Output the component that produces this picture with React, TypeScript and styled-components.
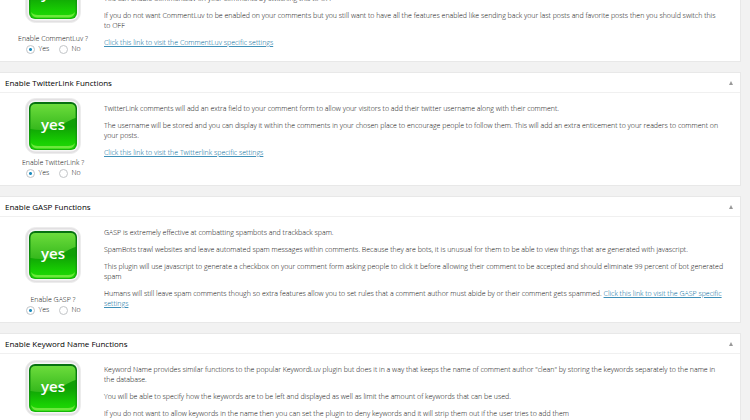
import React, { useId, useState } from "react";
import styled, { createGlobalStyle } from "styled-components";

const GlobalStyle = createGlobalStyle`
  * { box-sizing: border-box; }
  html, body { height: 100%; }
  body {
    margin: 0;
    overflow: hidden;
    background: #f2f2f2;
    color: #0c0c0c;
    font-family: "Open Sans", "Noto Sans", sans-serif;
    font-size: 7px;
    font-weight: 300;
    line-height: 10px;
  }
`;

const Page = styled.main`
  display: flex;
  flex-direction: column;
  gap: 10px;
  margin-top: -40px;
  padding-right: 9px;
`;

const Card = styled.section`
  background: #fff;
  border: 1px solid #e8e8e8;
  border-left: 0;
`;

const CardHeader = styled.header`
  display: flex;
  align-items: center;
  justify-content: space-between;
  height: 20px;
  padding: 0 5px;
  border-bottom: 1px solid #f0f0f0;
`;

const Title = styled.h3`
  margin: 0;
  color: #000;
  font-size: 8px;
  font-weight: 500;
  line-height: 12px;
`;

const Toggle = styled.button`
  display: flex;
  align-items: center;
  justify-content: center;
  width: 8px;
  height: 8px;
  padding: 0;
  border: 0;
  background: none;
  color: #999;
`;

const CardBody = styled.div`
  display: grid;
  grid-template-columns: 98px 1fr;
  column-gap: 2px;
  padding: 0 14px 7px 4px;
`;

const Control = styled.div<{ $top: number; $gap: number }>`
  display: flex;
  flex-direction: column;
  align-items: center;
  gap: ${(p) => p.$gap}px;
  padding-top: ${(p) => p.$top}px;
`;

const Choice = styled.fieldset`
  display: flex;
  flex-direction: column;
  align-items: center;
  margin: 0;
  padding: 0;
  border: 0;
`;

const Legend = styled.legend`
  padding: 0;
  text-align: center;
`;

const Options = styled.div`
  display: grid;
  grid-template-columns: 33px 22px;
`;

const Option = styled.label`
  display: flex;
  align-items: center;
  gap: 4px;
`;

const Radio = styled.input`
  appearance: none;
  flex: none;
  width: 9px;
  height: 9px;
  margin: 0;
  border: 1px solid #c2c5c8;
  border-radius: 50%;
  background: #fff;
  &:checked {
    background: radial-gradient(circle, #1e8cbe 0 1px, #fff 2px);
  }
`;

const Copy = styled.div<{ $top: number }>`
  display: flex;
  flex-direction: column;
  gap: 7px;
  padding-top: ${(p) => p.$top}px;
`;

const Paragraph = styled.p`
  margin: 0;
`;

const Link = styled.a`
  color: #006799;
  text-decoration: underline;
  text-decoration-color: #3f90b8;
`;

const Badge = styled.svg`
  display: block;
  width: 56px;
  height: 56px;
`;

function YesBadge() {
  const id = useId();
  const ref = (name: string) => `url(#${id}${name})`;
  return (
    <Badge viewBox="0 0 56 56" role="img" aria-label="yes">
      <defs>
        <linearGradient id={`${id}base`} x1="0" y1="0" x2="0" y2="1">
          <stop offset="0" stopColor="#189a0c" />
          <stop offset="0.5" stopColor="#0fa005" />
          <stop offset="0.85" stopColor="#18cf02" />
          <stop offset="1" stopColor="#22d808" />
        </linearGradient>
        <linearGradient id={`${id}gloss`} x1="0" y1="0" x2="0" y2="1">
          <stop offset="0" stopColor="#6cdc3c" />
          <stop offset="1" stopColor="#35b81c" />
        </linearGradient>
        <linearGradient id={`${id}rim`} x1="0" y1="0" x2="0" y2="1">
          <stop offset="0" stopColor="#067010" />
          <stop offset="0.45" stopColor="#0d8a0c" />
          <stop offset="1" stopColor="#16b808" />
        </linearGradient>
      </defs>
      <rect x="0.5" y="0.5" width="55" height="55" rx="10" fill="#e2e0e2" stroke="#ececec" />
      <rect x="2.5" y="2.5" width="51" height="51" rx="8" fill="#f6f6f6" />
      <rect x="4" y="4" width="48" height="48" rx="6" fill={ref("rim")} />
      <rect x="5.5" y="6" width="45" height="45" rx="5" fill={ref("base")} />
      <path
        d="M5.5 11Q5.5 6 10.5 6H45.5Q50.5 6 50.5 11V20C43 22 38 28 27 30.500C19 32.500 12 32 5.500 31Z"
        fill={ref("gloss")}
      />
      <path d="M6 45Q7 50 12 50.500H44Q49 50 50 45Q48 48 43 48H13Q8 48 6 45Z" fill="#6ce83c" />
      <text
        x="28"
        y="32"
        textAnchor="middle"
        fill="#fff"
        fontFamily="Open Sans, sans-serif"
        fontSize="15"
        fontWeight="600"
      >
        yes
      </text>
    </Badge>
  );
}

type FeatureProps = {
  name: string;
  title?: string;
  badgeTop: number;
  badgeGap: number;
  copyTop?: number;
  children: React.ReactNode;
};

function Feature({ name, title, badgeTop, badgeGap, copyTop = 11, children }: FeatureProps) {
  const [enabled, setEnabled] = useState(true);
  return (
    <Card>
      {title && (
        <CardHeader>
          <Title>{title}</Title>
          <Toggle type="button" aria-label="Collapse">
            <svg width="4" height="4" viewBox="0 0 4 4">
              <path d="M2 0L4 4H0Z" fill="currentColor" />
            </svg>
          </Toggle>
        </CardHeader>
      )}
      <CardBody>
        <Control $top={badgeTop} $gap={badgeGap}>
          <YesBadge />
          <Choice>
            <Legend>Enable {name} ?</Legend>
            <Options>
              <Option>
                <Radio type="radio" name={name} checked={enabled} onChange={() => setEnabled(true)} />
                Yes
              </Option>
              <Option>
                <Radio type="radio" name={name} checked={!enabled} onChange={() => setEnabled(false)} />
                No
              </Option>
            </Options>
          </Choice>
        </Control>
        <Copy $top={copyTop}>{children}</Copy>
      </CardBody>
    </Card>
  );
}

export default function App() {
  return (
    <>
      <GlobalStyle />
      <Page>
        <Feature name="CommentLuv" badgeTop={6} badgeGap={11} copyTop={33}>
          <Paragraph>You can enable CommentLuv on your comments by switching this to OFF</Paragraph>
          <Paragraph>
            If you do not want CommentLuv to be enabled on your comments but you still want to have all the
            features enabled like sending back your last posts and favorite posts then you should switch this
            to&nbsp;OFF
          </Paragraph>
          <Paragraph>
            <Link href="#commentluv">Click this link to visit the CommentLuv specific settings</Link>
          </Paragraph>
        </Feature>
        <Feature name="TwitterLink" title="Enable TwitterLink Functions" badgeTop={5} badgeGap={4}>
          <Paragraph>
            TwitterLink comments will add an extra field to your comment form to allow your visitors to add their
            twitter username along with their comment.
          </Paragraph>
          <Paragraph>
            The username will be stored and you can display it within the comments in your chosen place to
            encourage people to follow them. This will add an extra enticement to your readers to comment on your
            posts.
          </Paragraph>
          <Paragraph>
            <Link href="#twitterlink">Click this link to visit the Twitterlink specific settings</Link>
          </Paragraph>
        </Feature>
        <Feature name="GASP" title="Enable GASP Functions" badgeTop={10} badgeGap={12}>
          <Paragraph>GASP is extremely effective at combatting spambots and trackback spam.</Paragraph>
          <Paragraph>
            SpamBots trawl websites and leave automated spam messages within comments. Because they are bots, it
            is unusual for them to be able to view things that are generated with javascript.
          </Paragraph>
          <Paragraph>
            This plugin will use javascript to generate a checkbox on your comment form asking people to click it
            before allowing their comment to be accepted and should eliminate 99 percent of bot generated spam
          </Paragraph>
          <Paragraph>
            Humans will still leave spam comments though so extra features allow you to set rules that a comment
            author must abide by or their comment gets spammed.{" "}
            <Link href="#gasp">Click this link to visit the GASP specific settings</Link>
          </Paragraph>
        </Feature>
        <Feature name="Keyword Name" title="Enable Keyword Name Functions" badgeTop={6} badgeGap={11}>
          <Paragraph>
            Keyword Name provides similar functions to the popular KeywordLuv plugin but does it in a way that
            keeps the name of comment author "clean" by storing the keywords separately to the name in the
            database.
          </Paragraph>
          <Paragraph>
            You will be able to specify how the keywords are to be left and displayed as well as limit the amount
            of keywords that can be used.
          </Paragraph>
          <Paragraph>
            If you do not want to allow keywords in the name then you can set the plugin to deny keywords and it
            will strip them out if the user tries to add them
          </Paragraph>
        </Feature>
      </Page>
    </>
  );
}
